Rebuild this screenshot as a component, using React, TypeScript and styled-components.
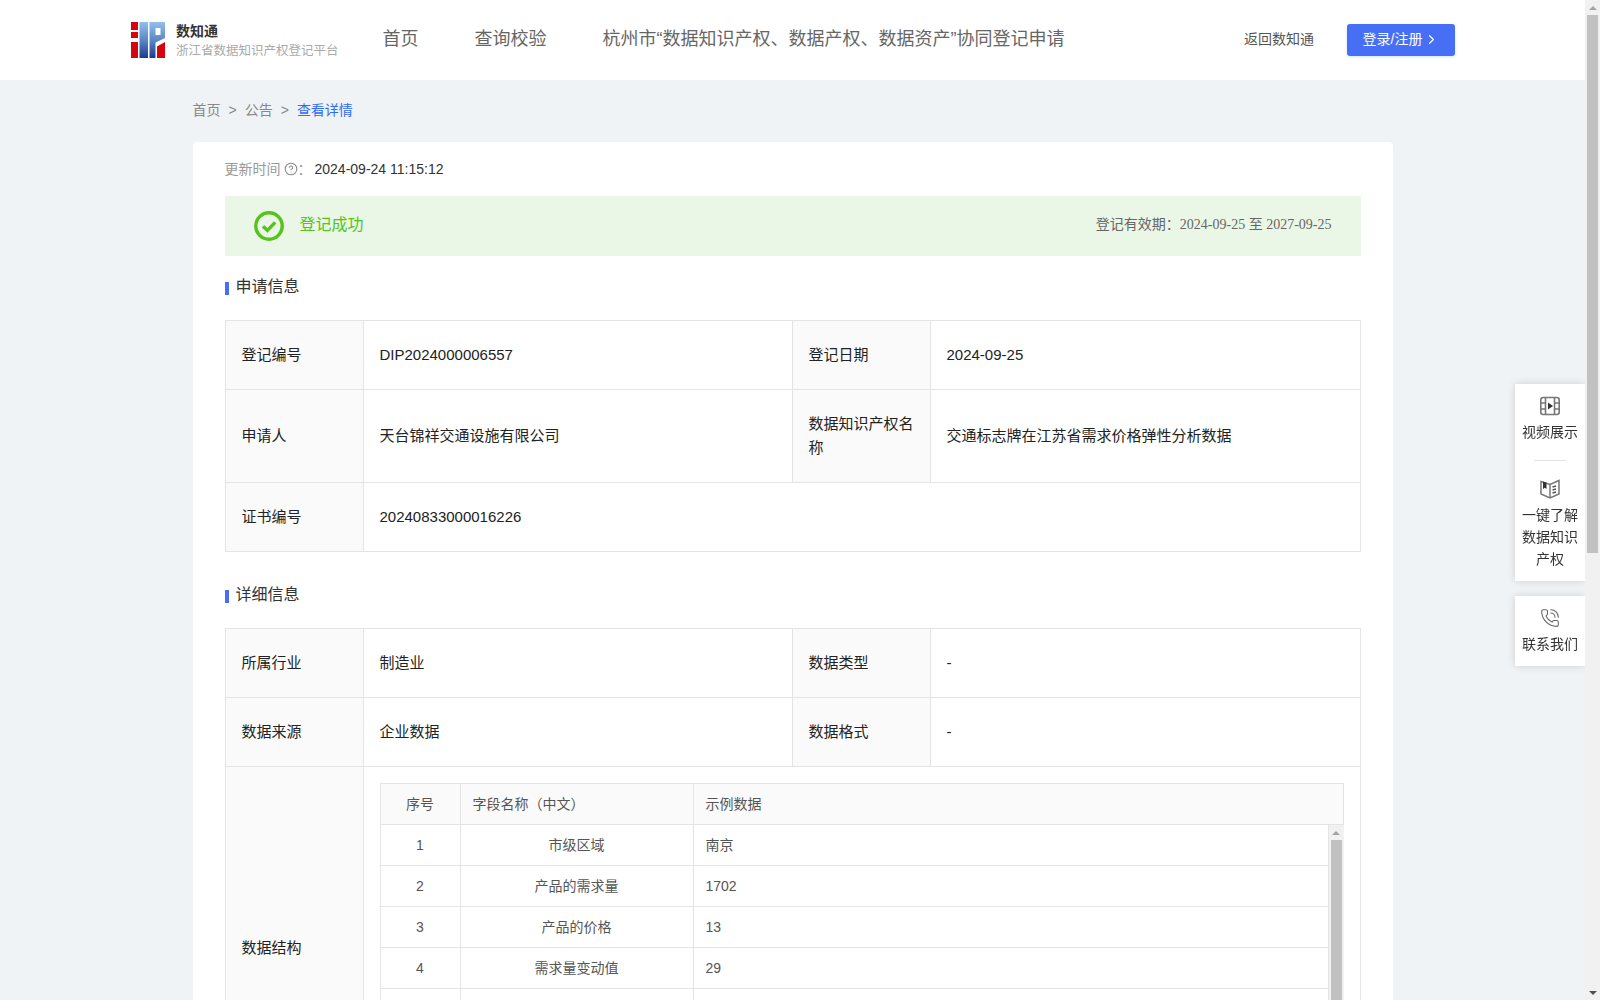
import styled, { createGlobalStyle } from 'styled-components'
import { ChevronRight, CircleHelp, PhoneCall } from 'lucide-react'

const GlobalStyle = createGlobalStyle`
	body {
		margin: 0;
		padding-right: 15px;
		background-color: #eff3f6;
		font-family: 'Liberation Sans', 'Noto Sans CJK SC', sans-serif;
		color: #333;
	}
`

const Header = styled.header`
	height: 80px;
	background-color: #fff;
	display: flex;
	align-items: center;
	padding: 0 130px 0 131px;
`

const Brand = styled.div`
	display: flex;
	align-items: center;
	gap: 11px;
`

const BrandText = styled.div`
	display: flex;
	flex-direction: column;
	gap: 2px;
`

const BrandName = styled.div`
	padding-top: 1px;
	font-size: 14px;
	line-height: 18px;
	font-weight: 700;
	color: #333;
`

const BrandSub = styled.div`
	font-size: 12.5px;
	line-height: 18px;
	color: #aaa;
	white-space: nowrap;
`

const Nav = styled.nav`
	display: flex;
	gap: 56px;
	margin-left: 44px;
	margin-top: -3px;
`

const NavLink = styled.a`
	font-size: 18px;
	line-height: 24px;
	color: #666;
	white-space: nowrap;
`

const HeaderRight = styled.div`
	margin-left: auto;
	display: flex;
	align-items: center;
	gap: 33px;
`

const BackLink = styled.a`
	font-size: 14px;
	line-height: 20px;
	margin-top: -2px;
	color: #555;
`

const LoginButton = styled.button`
	width: 108px;
	height: 32px;
	padding: 0 0 2px;
	border: 0;
	border-radius: 3px;
	background-color: #466ff5;
	color: #fff;
	font-family: inherit;
	font-size: 14px;
	line-height: 20px;
	display: flex;
	align-items: center;
	justify-content: center;
	gap: 2px;
	box-shadow: 0 1px 3px rgba(70, 111, 245, 0.2);
`

const Main = styled.main`
	width: 1200px;
	min-height: 1706px;
	margin: 0 auto;
	padding-top: 19px;
`

const Crumbs = styled.div`
	display: flex;
	font-size: 14px;
	line-height: 22px;
	color: #888;
	margin-bottom: 21px;
`

const CrumbSep = styled.span`
	margin: 0 8px;
`

const CrumbCurrent = styled.span`
	color: #2f6bf6;
`

const Card = styled.section`
	background-color: #fff;
	border-radius: 4px;
	padding: 16px 32px 32px;
`

const UpdateLine = styled.div`
	display: flex;
	align-items: center;
	font-size: 14px;
	line-height: 22px;
	color: #999;
	margin-bottom: 16px;
	svg {
		margin-left: 3px;
	}
`

const UpdateTime = styled.span`
	margin-left: 3px;
	color: #333;
`

const SuccessBar = styled.div`
	height: 60px;
	box-sizing: border-box;
	background-color: #eaf7e6;
	display: flex;
	align-items: center;
	padding: 0 29px;
	gap: 16px;
`

const SuccessText = styled.span`
	margin-top: -3px;
	font-size: 16px;
	line-height: 22px;
	color: #52c41a;
`

const Validity = styled.span`
	margin-left: auto;
	margin-top: -3px;
	font-family: 'Liberation Serif', 'Noto Sans CJK SC', serif;
	font-size: 14px;
	line-height: 20px;
	color: #666;
`

const SectionTitle = styled.h3<{ $top: number }>`
	display: flex;
	align-items: center;
	gap: 7px;
	margin: ${(props) => props.$top}px 0 22px;
	font-size: 16px;
	line-height: 22px;
	font-weight: 400;
	color: #333;
	&::before {
		content: '';
		width: 4px;
		height: 13px;
		margin-top: 3px;
		background-color: #466ff5;
	}
`

const InfoTable = styled.table`
	width: 1135px;
	table-layout: fixed;
	border-collapse: collapse;
	font-size: 15px;
	line-height: 24px;
	color: #222;
`

const LabelCell = styled.td`
	border: 1px solid #e4e4e4;
	background-color: #fafafa;
	padding: 22px 16px;
`

const ValueCell = styled.td`
	border: 1px solid #e4e4e4;
	padding: 22px 16px;
`

const StructureCell = styled.td`
	border: 1px solid #e4e4e4;
	padding: 16px;
`

const FieldTable = styled.table`
	width: 100%;
	table-layout: fixed;
	border-collapse: collapse;
	font-size: 14px;
	line-height: 20px;
	color: #555;
`

const FieldHead = styled.th<{ $center?: boolean }>`
	height: 40px;
	padding: 0 12px;
	border: 1px solid #e4e4e4;
	background-color: #fafafa;
	font-weight: 400;
	text-align: ${(props) => (props.$center ? 'center' : 'left')};
`

const FieldBody = styled.div`
	display: flex;
	height: 287px;
`

const FieldRows = styled.div`
	flex: 1;
	min-width: 0;
	overflow: hidden;
`

const FieldCell = styled.td<{ $center?: boolean }>`
	height: 40px;
	padding: 0 12px;
	border: 1px solid #e4e4e4;
	border-top: 0;
	text-align: ${(props) => (props.$center ? 'center' : 'left')};
`

const ScrollTrack = styled.div`
	width: 15px;
	height: 100%;
	flex: none;
	background-color: #f1f1f1;
	display: flex;
	flex-direction: column;
`

const PageScroll = styled.div`
	position: fixed;
	top: 0;
	right: 0;
	height: 100vh;
`

const ScrollButton = styled.div<{ $down?: boolean }>`
	height: 15px;
	flex: none;
	display: flex;
	align-items: center;
	justify-content: center;
	&::before {
		content: '';
		border-left: 4px solid transparent;
		border-right: 4px solid transparent;
		border-top: ${(props) => (props.$down ? '4px solid #505050' : '0')};
		border-bottom: ${(props) => (props.$down ? '0' : '4px solid #a3a3a3')};
	}
`

const ScrollThumb = styled.div<{ $height: number }>`
	width: 11px;
	height: ${(props) => props.$height}px;
	flex: none;
	margin: 0 2px;
	background-color: #c1c1c1;
`

const ScrollRest = styled.div`
	flex: 1;
`

const SideRail = styled.aside`
	position: fixed;
	top: 384px;
	right: 15px;
	display: flex;
	flex-direction: column;
	gap: 15px;
`

const SideCard = styled.div`
	width: 70px;
	background-color: #fff;
	box-shadow: 0 0 8px rgba(0, 0, 0, 0.14);
	padding: 12px 7px 11px;
	box-sizing: border-box;
	display: flex;
	flex-direction: column;
`

const SideItem = styled.a`
	display: flex;
	flex-direction: column;
	align-items: center;
	gap: 5px;
	font-size: 14px;
	line-height: 22px;
	color: #333;
	text-align: center;
`

const SideDivider = styled.div`
	width: 32px;
	height: 1px;
	background-color: #e4e4e4;
	margin: 17px auto 18px;
`

const fields = [
	['市级区域', '南京'],
	['产品的需求量', '1702'],
	['产品的价格', '13'],
	['需求量变动值', '29'],
	['价格变动值', '1'],
	['需求变动率', '1.7%'],
	['价格变动率', '7.7%'],
	['价格弹性系数', '0.22'],
	['统计年份', '2023']
]

const Logo = () => (
	<svg width="34" height="36" viewBox="0 0 34 36">
		<defs>
			<linearGradient id="logoBlue" x1="0" y1="0" x2="0" y2="1">
				<stop offset="0" stopColor="#93bfec" />
				<stop offset="0.5" stopColor="#5a88c8" />
				<stop offset="1" stopColor="#1d3a8d" />
			</linearGradient>
		</defs>
		<rect x="0" y="0" width="7" height="8" fill="#d5050f" />
		<rect x="0" y="10" width="7" height="6" fill="#d5050f" />
		<rect x="0" y="20" width="7" height="16" fill="#d5050f" />
		<rect x="8.5" y="0" width="8.5" height="36" fill="url(#logoBlue)" />
		<path d="M18.5 0H34V16L24.5 20.5V36H18.5Z" fill="url(#logoBlue)" />
		<rect x="24.5" y="6" width="5" height="7" fill="#fff" />
		<path d="M26 24.5L34 20V36H26Z" fill="#d5050f" />
	</svg>
)

const SuccessIcon = () => (
	<svg width="30" height="30" viewBox="0 0 30 30" fill="none" stroke="#52c41a">
		<circle cx="15" cy="15" r="13.2" strokeWidth="3.4" />
		<path d="M9 15.2L13.4 19.4L21.2 11.4" strokeWidth="3.4" />
	</svg>
)

const FilmIcon = () => (
	<svg width="20" height="20" viewBox="0 0 20 20" fill="none" stroke="#777" strokeWidth="1.6">
		<rect x="0.8" y="1.5" width="18.4" height="17" rx="2.5" />
		<path d="M5.5 1.5V18.5M14.5 1.5V18.5M1 7H5.5M1 13H5.5M14.5 7H19M14.5 13H19" />
		<path d="M8 6.5L13 10L8 13.5Z" fill="#333" stroke="none" />
	</svg>
)

const BookIcon = () => (
	<svg width="20" height="20" viewBox="0 0 20 20" fill="none" stroke="#777" strokeWidth="1.5">
		<path d="M1 2.5L10 5.5L19 1.5V15L10 19L1 15Z" />
		<path d="M10 5.5V19" />
		<path d="M12.5 8L16 7M12.5 11L16 10M12.5 14L16 13" stroke="#555" />
		<path d="M3 2.5L6.5 3.7V10L4.8 8.8L3 10Z" fill="#333" stroke="none" />
	</svg>
)

const App = () => {
	return (
		<>
			<GlobalStyle />
			<Header>
				<Brand>
					<Logo />
					<BrandText>
						<BrandName>数知通</BrandName>
						<BrandSub>浙江省数据知识产权登记平台</BrandSub>
					</BrandText>
				</Brand>
				<Nav>
					<NavLink>首页</NavLink>
					<NavLink>查询校验</NavLink>
					<NavLink>杭州市“数据知识产权、数据产权、数据资产”协同登记申请</NavLink>
				</Nav>
				<HeaderRight>
					<BackLink>返回数知通</BackLink>
					<LoginButton>
						登录/注册
						<ChevronRight size={15} />
					</LoginButton>
				</HeaderRight>
			</Header>

			<Main>
				<Crumbs>
					<span>首页</span>
					<CrumbSep>&gt;</CrumbSep>
					<span>公告</span>
					<CrumbSep>&gt;</CrumbSep>
					<CrumbCurrent>查看详情</CrumbCurrent>
				</Crumbs>

				<Card>
					<UpdateLine>
						更新时间
						<CircleHelp size={14} strokeWidth={1.8} color="#888" />
						：<UpdateTime>2024-09-24 11:15:12</UpdateTime>
					</UpdateLine>

					<SuccessBar>
						<SuccessIcon />
						<SuccessText>登记成功</SuccessText>
						<Validity>登记有效期：2024-09-25 至 2027-09-25</Validity>
					</SuccessBar>

					<SectionTitle $top={20}>申请信息</SectionTitle>
					<InfoTable>
						<colgroup>
							<col width="138" />
							<col width="429" />
							<col width="138" />
							<col width="430" />
						</colgroup>
						<tbody>
							<tr>
								<LabelCell>登记编号</LabelCell>
								<ValueCell>DIP2024000006557</ValueCell>
								<LabelCell>登记日期</LabelCell>
								<ValueCell>2024-09-25</ValueCell>
							</tr>
							<tr>
								<LabelCell>申请人</LabelCell>
								<ValueCell>天台锦祥交通设施有限公司</ValueCell>
								<LabelCell>数据知识产权名称</LabelCell>
								<ValueCell>交通标志牌在江苏省需求价格弹性分析数据</ValueCell>
							</tr>
							<tr>
								<LabelCell>证书编号</LabelCell>
								<ValueCell colSpan={3}>20240833000016226</ValueCell>
							</tr>
						</tbody>
					</InfoTable>

					<SectionTitle $top={32}>详细信息</SectionTitle>
					<InfoTable>
						<colgroup>
							<col width="138" />
							<col width="429" />
							<col width="138" />
							<col width="430" />
						</colgroup>
						<tbody>
							<tr>
								<LabelCell>所属行业</LabelCell>
								<ValueCell>制造业</ValueCell>
								<LabelCell>数据类型</LabelCell>
								<ValueCell>-</ValueCell>
							</tr>
							<tr>
								<LabelCell>数据来源</LabelCell>
								<ValueCell>企业数据</ValueCell>
								<LabelCell>数据格式</LabelCell>
								<ValueCell>-</ValueCell>
							</tr>
							<tr>
								<LabelCell>数据结构</LabelCell>
								<StructureCell colSpan={3}>
									<FieldTable>
										<colgroup>
											<col width="80" />
											<col width="233" />
											<col />
										</colgroup>
										<thead>
											<tr>
												<FieldHead $center>序号</FieldHead>
												<FieldHead>字段名称（中文）</FieldHead>
												<FieldHead>示例数据</FieldHead>
											</tr>
										</thead>
									</FieldTable>
									<FieldBody>
										<FieldRows>
											<FieldTable>
												<colgroup>
													<col width="80" />
													<col width="233" />
													<col />
												</colgroup>
												<tbody>
													{fields.map(([name, sample], index) => (
														<tr key={name}>
															<FieldCell $center>{index + 1}</FieldCell>
															<FieldCell $center>{name}</FieldCell>
															<FieldCell>{sample}</FieldCell>
														</tr>
													))}
												</tbody>
											</FieldTable>
										</FieldRows>
										<ScrollTrack>
											<ScrollButton />
											<ScrollThumb $height={190} />
											<ScrollRest />
											<ScrollButton $down />
										</ScrollTrack>
									</FieldBody>
								</StructureCell>
							</tr>
						</tbody>
					</InfoTable>
				</Card>
			</Main>

			<SideRail>
				<SideCard>
					<SideItem>
						<FilmIcon />
						视频展示
					</SideItem>
					<SideDivider />
					<SideItem>
						<BookIcon />
						一键了解数据知识产权
					</SideItem>
				</SideCard>
				<SideCard>
					<SideItem>
						<PhoneCall size={20} strokeWidth={1.3} color="#666" />
						联系我们
					</SideItem>
				</SideCard>
			</SideRail>

			<PageScroll>
				<ScrollTrack>
					<ScrollButton />
					<ScrollThumb $height={538} />
					<ScrollRest />
					<ScrollButton $down />
				</ScrollTrack>
			</PageScroll>
		</>
	)
}

export default App
